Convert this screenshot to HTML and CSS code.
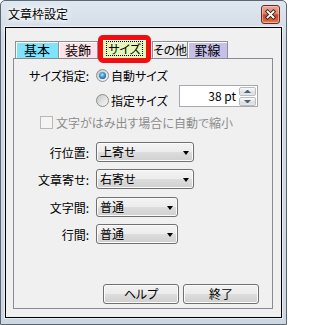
FILE: index.html
```html
<!DOCTYPE html>
<html lang="ja">
<head>
<meta charset="utf-8">
<title>文章枠設定</title>
<link rel="stylesheet" href="styles.css">
</head>
<body>
<div class="window">
  <div class="titlebar">
    <span class="title">文章枠設定</span>
    <span class="close">
      <svg width="17" height="17" viewBox="0 0 17 17">
        <path d="M5.5 5.5 L11.5 11.5 M11.5 5.5 L5.5 11.5" stroke="#3b1d14" stroke-width="3.6" stroke-linecap="square" fill="none"/>
        <path d="M5.5 5.5 L11.5 11.5 M11.5 5.5 L5.5 11.5" stroke="#ffffff" stroke-width="1.8" stroke-linecap="square" fill="none"/>
      </svg>
    </span>
  </div>
  <div class="client">
    <div class="tabs">
      <div class="tab tab-basic">基本</div>
      <div class="tab tab-deco">装飾</div>
      <div class="tab tab-size selected"><span class="focus">サイズ</span></div>
      <div class="tab tab-other">その他</div>
      <div class="tab tab-rule">罫線</div>
    </div>
    <div class="panel">
      <div class="row row-size">
        <span class="label">サイズ指定:</span>
        <span class="option"><span class="radio checked"></span>自動サイズ</span>
      </div>
      <div class="row row-custom">
        <span class="option"><span class="radio"></span>指定サイズ</span>
        <div class="spin">
          <span class="spin-value">38 pt</span>
          <span class="spin-buttons">
            <span class="spin-btn up"></span>
            <span class="spin-btn down"></span>
          </span>
        </div>
      </div>
      <div class="row row-check">
        <span class="checkbox"></span>
        <span class="disabled">文字がはみ出す場合に自動で縮小</span>
      </div>
      <div class="row row-select first">
        <span class="label">行位置:</span>
        <div class="select wide"><span>上寄せ</span><span class="arrow"></span></div>
      </div>
      <div class="row row-select">
        <span class="label">文章寄せ:</span>
        <div class="select wide"><span>右寄せ</span><span class="arrow"></span></div>
      </div>
      <div class="row row-select third">
        <span class="label">文字間:</span>
        <div class="select narrow"><span>普通</span><span class="arrow"></span></div>
      </div>
      <div class="row row-select">
        <span class="label">行間:</span>
        <div class="select narrow"><span>普通</span><span class="arrow"></span></div>
      </div>
      <div class="buttons">
        <button class="btn">ヘルプ</button>
        <button class="btn">終了</button>
      </div>
    </div>
  </div>
</div>
</body>
</html>
```
FILE: styles.css
```css
* { box-sizing: border-box; }
html, body { margin: 0; padding: 0; }
body {
  width: 287px;
  height: 325px;
  overflow: hidden;
  background: #ffffff;
  font-family: "Noto Sans CJK JP", "Noto Sans", sans-serif;
  font-size: 12px;
  font-feature-settings: "palt";
  color: #000;
}

.window {
  width: 287px;
  height: 325px;
  border: 1px solid #5d6772;
  border-radius: 5px 5px 0 0;
  background: linear-gradient(#dfe7f0, #cfd9e5 40px, #cdd7e3);
  padding: 0 4px 6px 4px;
  display: flex;
  flex-direction: column;
}

.titlebar {
  height: 26px;
  flex: none;
  display: flex;
  align-items: flex-start;
  justify-content: space-between;
  padding-left: 3px;
}
.title {
  font-size: 12px;
  line-height: 26px;
  font-feature-settings: normal;
  text-shadow: 0 0 4px #fff, 0 0 8px #fff, 0 0 10px #fff;
}
.close {
  width: 19px;
  height: 19px;
  margin-top: 4px;
  margin-right: 2px;
  border: 1px solid #6a2a1c;
  border-radius: 3px;
  background: linear-gradient(#e9a898 0%, #d88670 45%, #c4462a 52%, #d5643f 85%, #e58a5c 100%);
  box-shadow: inset 0 0 0 1px rgba(255, 220, 210, 0.5);
  display: flex;
  align-items: center;
  justify-content: center;
}
.close svg { display: block; }

.client {
  flex: 1;
  border: 1px solid #000;
  background: #f0f0f0;
  box-shadow: 0 0 0 1px rgba(255, 255, 255, 0.55);
  display: flex;
  flex-direction: column;
}

/* tabs */
.tabs {
  height: 19px;
  margin: 11px 0 0 9px;
  display: flex;
  align-items: flex-end;
}
.tab {
  height: 17px;
  border: 1px solid #8e9097;
  border-bottom: none;
  box-shadow: inset 1px 1px 0 #ffffff;
  text-align: center;
  line-height: 16px;
  font-size: 13px;
  white-space: nowrap;
  overflow: hidden;
  font-feature-settings: normal;
}
.tab-basic { width: 44px; background: #7fe3fb; }
.tab-deco { width: 39px; border-left: none; background: #ffe1e8; }
.tab-other { width: 36px; background: #ebebeb; font-size: 12px; font-feature-settings: "palt"; letter-spacing: -0.3px; }
.tab-rule { width: 40px; border-left: none; background: #c6bfe8; }
.tab.selected {
  width: 47px;
  height: 20px;
  margin: 0 4px -1px 3px;
  background: #e5f6bb;
  position: relative;
  z-index: 1;
  overflow: visible;
  line-height: 18px;
  font-size: 12px;
  font-feature-settings: "palt";
}
.tab.selected::after {
  content: "";
  position: absolute;
  top: -5px;
  left: -4px;
  right: -4px;
  bottom: -4px;
  border: 5px solid #f20d10;
  border-radius: 5px;
}
.focus {
  display: inline-block;
  border: 1px dotted #000;
  line-height: 13px;
  padding: 0 1px;
}

/* panel */
.panel {
  margin-left: 7px;
  width: 260px;
  height: 251px;
  border: 1px solid #898c95;
  display: flex;
  flex-direction: column;
}
.row {
  display: flex;
  align-items: center;
}
.label {
  width: 75px;
  margin-right: 7px;
  text-align: right;
  white-space: nowrap;
}
.option {
  display: flex;
  align-items: center;
  gap: 2px;
  white-space: nowrap;
}
.radio {
  width: 13px;
  height: 13px;
  flex: none;
  border-radius: 50%;
  border: 1px solid #8c8e90;
  background: linear-gradient(135deg, #c4c4c4 0%, #dedede 45%, #f8f8f8 100%);
  display: flex;
  align-items: center;
  justify-content: center;
}
.radio.checked::after {
  content: "";
  width: 7px;
  height: 7px;
  border-radius: 50%;
  background: radial-gradient(circle at 45% 40%, #bfe8ff 0, #4aa3e0 35%, #1a5fa0 75%, #0e3f70 100%);
}

.row-size {
  margin-top: 7px;
  height: 19px;
}
.row-custom {
  height: 25px;
  align-items: flex-start;
}
.row-custom .option {
  margin-left: 82px;
  margin-top: 5px;
  height: 20px;
}
.spin {
  margin-left: auto;
  margin-right: 14px;
  width: 79px;
  height: 22px;
  border: 1px solid #a6a8ae;
  background: #fff;
  display: flex;
}
.spin-value {
  flex: 1;
  text-align: right;
  padding-right: 3px;
  line-height: 20px;
  font-size: 12px;
}
.spin-buttons {
  width: 18px;
  padding: 1px 1px 0 0;
  display: flex;
  flex-direction: column;
  gap: 1px;
}
.spin-btn {
  flex: 1;
  border: 1px solid #b9bcc2;
  border-radius: 2px;
  background: linear-gradient(#fafafa, #e6e6e6 50%, #d9d9d9 51%, #e9e9e9);
  display: flex;
  align-items: center;
  justify-content: center;
}
.spin-btn::after {
  content: "";
  width: 1px;
  border-left: 3px solid transparent;
  border-right: 3px solid transparent;
}
.spin-btn.up::after { border-bottom: 3px solid #4b5e8b; }
.spin-btn.down::after { border-top: 3px solid #4b5e8b; }

.row-check {
  margin-top: 3px;
  height: 19px;
  padding-left: 26px;
  gap: 3px;
}
.checkbox {
  width: 13px;
  height: 13px;
  flex: none;
  border: 1px solid #b8b8b8;
  background: #f4f4f4;
}
.disabled {
  color: #8c8c8c;
  white-space: nowrap;
}

.row-select {
  height: 20px;
  margin-top: 7px;
}
.row-select.first { margin-top: 10px; }
.row-select.third { margin-top: 8px; }
.select {
  height: 20px;
  border: 1px solid #707070;
  border-radius: 3px;
  background: linear-gradient(#f3f3f3 0%, #ececec 50%, #dddddd 51%, #d0d0d0 100%);
  box-shadow: inset 0 0 0 1px #fbfbfb;
  padding: 0 4px 0 3px;
  display: flex;
  align-items: center;
  justify-content: space-between;
  line-height: 18px;
}
.select.wide { width: 98px; }
.select.narrow { width: 82px; }
.arrow {
  width: 1px;
  height: 0;
  border-left: 3px solid transparent;
  border-right: 3px solid transparent;
  border-top: 4px solid #000;
  margin-top: 1px;
}

.buttons {
  margin-top: auto;
  margin-bottom: 4px;
  padding-right: 13px;
  display: flex;
  justify-content: flex-end;
  gap: 4px;
}
.btn {
  width: 76px;
  height: 20px;
  padding: 0;
  border: 1px solid #707070;
  border-radius: 3px;
  background: linear-gradient(#f2f2f2 0%, #ebebeb 50%, #dddddd 51%, #cfcfcf 100%);
  box-shadow: inset 0 0 0 1px #fcfcfc;
  font-family: "Noto Sans CJK JP", "Noto Sans", sans-serif;
  font-size: 12px;
  font-feature-settings: "palt";
  line-height: 18px;
  color: #000;
}
```
